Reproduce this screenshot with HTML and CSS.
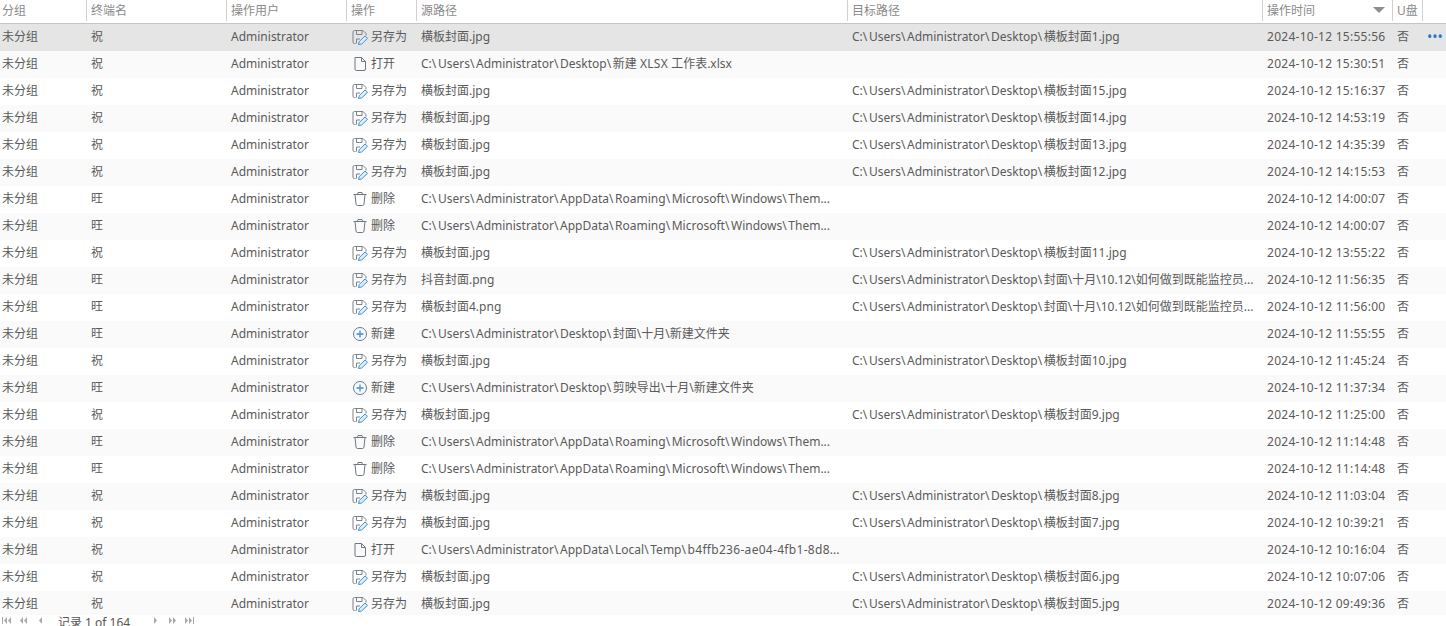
FILE: index.html
```html
<!DOCTYPE html>
<html lang="zh">
<head>
<meta charset="utf-8">
<title>文件操作记录</title>
<link rel="stylesheet" href="styles.css">
</head>
<body>
<svg class="defs" width="0" height="0" aria-hidden="true">
  <symbol id="i-save" viewBox="0 0 16 16">
    <path d="M3.500 14.500H2.500Q1 14.500 1 13V3Q1 1.500 2.500 1.500H11L14 4.500V6.500" fill="none" stroke="#7b838b"/>
    <path d="M4.500 1.500V5.500H10V1.500M4.500 14.500V10H8" fill="none" stroke="#7b838b"/>
    <path d="M6.500 15.500L7.300 12.500L13 7L15.500 9.300L9.700 15Z" fill="#dcecf8" stroke="#3f92d4" stroke-linejoin="round"/>
  </symbol>
  <symbol id="i-open" viewBox="0 0 16 16">
    <path d="M3 1.500H9.500L13.500 5.500V13Q13.500 14.500 12 14.500H4.500Q3 14.500 3 13ZM9.500 1.500V5.500H13.500" fill="none" stroke="#6f7780"/>
  </symbol>
  <symbol id="i-del" viewBox="0 0 16 16">
    <path d="M1.500 3.500H14.500M5.500 3.500L6 1.500H10L10.500 3.500M3 3.500L4 13Q4.200 14.500 5.500 14.500H10.500Q11.800 14.500 12 13L13 3.500" fill="none" stroke="#6f7780"/>
  </symbol>
  <symbol id="i-new" viewBox="0 0 16 16">
    <circle cx="8" cy="8" r="6.500" fill="none" stroke="#5f7f9c"/>
    <path d="M4.500 8H11.500M8 4.500V11.500" fill="none" stroke="#3d8fd1" stroke-width="1.300"/>
  </symbol>
</svg>
<main class="grid">
  <div class="row head">
    <div class="c bd">分组</div><div class="c bd">终端名</div><div class="c bd">操作用户</div><div class="c bd">操作</div><div class="c bd">源路径</div><div class="c bd">目标路径</div>
    <div class="c bd sort">操作时间<span class="arrow"></span></div><div class="c bd">U盘</div><div class="c"></div>
  </div>
  <div class="body">
    <div class="row sel"><div class="c">未分组</div><div class="c">祝</div><div class="c">Administrator</div><div class="c op"><svg class="ic"><use href="#i-save"/></svg>另存为</div><div class="c">横板封面.jpg</div><div class="c">C:<b>\</b>Users<b>\</b>Administrator<b>\</b>Desktop<b>\</b>横板封面1.jpg</div><div class="c">2024-10-12 15:55:56</div><div class="c">否</div><div class="c more">•••</div></div>
    <div class="row"><div class="c">未分组</div><div class="c">祝</div><div class="c">Administrator</div><div class="c op"><svg class="ic"><use href="#i-open"/></svg>打开</div><div class="c">C:<b>\</b>Users<b>\</b>Administrator<b>\</b>Desktop<b>\</b>新建 <span class="wide">XLSX</span> 工作表.xlsx</div><div class="c"></div><div class="c">2024-10-12 15:30:51</div><div class="c">否</div><div class="c"></div></div>
    <div class="row"><div class="c">未分组</div><div class="c">祝</div><div class="c">Administrator</div><div class="c op"><svg class="ic"><use href="#i-save"/></svg>另存为</div><div class="c">横板封面.jpg</div><div class="c">C:<b>\</b>Users<b>\</b>Administrator<b>\</b>Desktop<b>\</b>横板封面15.jpg</div><div class="c">2024-10-12 15:16:37</div><div class="c">否</div><div class="c"></div></div>
    <div class="row"><div class="c">未分组</div><div class="c">祝</div><div class="c">Administrator</div><div class="c op"><svg class="ic"><use href="#i-save"/></svg>另存为</div><div class="c">横板封面.jpg</div><div class="c">C:<b>\</b>Users<b>\</b>Administrator<b>\</b>Desktop<b>\</b>横板封面14.jpg</div><div class="c">2024-10-12 14:53:19</div><div class="c">否</div><div class="c"></div></div>
    <div class="row"><div class="c">未分组</div><div class="c">祝</div><div class="c">Administrator</div><div class="c op"><svg class="ic"><use href="#i-save"/></svg>另存为</div><div class="c">横板封面.jpg</div><div class="c">C:<b>\</b>Users<b>\</b>Administrator<b>\</b>Desktop<b>\</b>横板封面13.jpg</div><div class="c">2024-10-12 14:35:39</div><div class="c">否</div><div class="c"></div></div>
    <div class="row"><div class="c">未分组</div><div class="c">祝</div><div class="c">Administrator</div><div class="c op"><svg class="ic"><use href="#i-save"/></svg>另存为</div><div class="c">横板封面.jpg</div><div class="c">C:<b>\</b>Users<b>\</b>Administrator<b>\</b>Desktop<b>\</b>横板封面12.jpg</div><div class="c">2024-10-12 14:15:53</div><div class="c">否</div><div class="c"></div></div>
    <div class="row"><div class="c">未分组</div><div class="c">旺</div><div class="c">Administrator</div><div class="c op"><svg class="ic"><use href="#i-del"/></svg>删除</div><div class="c">C:<b>\</b>Users<b>\</b>Administrator<b>\</b>AppData<b>\</b>Roaming<b>\</b>Microsoft<b>\</b>Windows<b>\</b>Them...</div><div class="c"></div><div class="c">2024-10-12 14:00:07</div><div class="c">否</div><div class="c"></div></div>
    <div class="row"><div class="c">未分组</div><div class="c">旺</div><div class="c">Administrator</div><div class="c op"><svg class="ic"><use href="#i-del"/></svg>删除</div><div class="c">C:<b>\</b>Users<b>\</b>Administrator<b>\</b>AppData<b>\</b>Roaming<b>\</b>Microsoft<b>\</b>Windows<b>\</b>Them...</div><div class="c"></div><div class="c">2024-10-12 14:00:07</div><div class="c">否</div><div class="c"></div></div>
    <div class="row"><div class="c">未分组</div><div class="c">祝</div><div class="c">Administrator</div><div class="c op"><svg class="ic"><use href="#i-save"/></svg>另存为</div><div class="c">横板封面.jpg</div><div class="c">C:<b>\</b>Users<b>\</b>Administrator<b>\</b>Desktop<b>\</b>横板封面11.jpg</div><div class="c">2024-10-12 13:55:22</div><div class="c">否</div><div class="c"></div></div>
    <div class="row"><div class="c">未分组</div><div class="c">旺</div><div class="c">Administrator</div><div class="c op"><svg class="ic"><use href="#i-save"/></svg>另存为</div><div class="c">抖音封面.png</div><div class="c">C:<b>\</b>Users<b>\</b>Administrator<b>\</b>Desktop<b>\</b>封面\十月\10.12\如何做到既能监控员...</div><div class="c">2024-10-12 11:56:35</div><div class="c">否</div><div class="c"></div></div>
    <div class="row"><div class="c">未分组</div><div class="c">旺</div><div class="c">Administrator</div><div class="c op"><svg class="ic"><use href="#i-save"/></svg>另存为</div><div class="c">横板封面4.png</div><div class="c">C:<b>\</b>Users<b>\</b>Administrator<b>\</b>Desktop<b>\</b>封面\十月\10.12\如何做到既能监控员...</div><div class="c">2024-10-12 11:56:00</div><div class="c">否</div><div class="c"></div></div>
    <div class="row"><div class="c">未分组</div><div class="c">旺</div><div class="c">Administrator</div><div class="c op"><svg class="ic"><use href="#i-new"/></svg>新建</div><div class="c">C:<b>\</b>Users<b>\</b>Administrator<b>\</b>Desktop<b>\</b>封面\十月\新建文件夹</div><div class="c"></div><div class="c">2024-10-12 11:55:55</div><div class="c">否</div><div class="c"></div></div>
    <div class="row"><div class="c">未分组</div><div class="c">祝</div><div class="c">Administrator</div><div class="c op"><svg class="ic"><use href="#i-save"/></svg>另存为</div><div class="c">横板封面.jpg</div><div class="c">C:<b>\</b>Users<b>\</b>Administrator<b>\</b>Desktop<b>\</b>横板封面10.jpg</div><div class="c">2024-10-12 11:45:24</div><div class="c">否</div><div class="c"></div></div>
    <div class="row"><div class="c">未分组</div><div class="c">旺</div><div class="c">Administrator</div><div class="c op"><svg class="ic"><use href="#i-new"/></svg>新建</div><div class="c">C:<b>\</b>Users<b>\</b>Administrator<b>\</b>Desktop<b>\</b>剪映导出\十月\新建文件夹</div><div class="c"></div><div class="c">2024-10-12 11:37:34</div><div class="c">否</div><div class="c"></div></div>
    <div class="row"><div class="c">未分组</div><div class="c">祝</div><div class="c">Administrator</div><div class="c op"><svg class="ic"><use href="#i-save"/></svg>另存为</div><div class="c">横板封面.jpg</div><div class="c">C:<b>\</b>Users<b>\</b>Administrator<b>\</b>Desktop<b>\</b>横板封面9.jpg</div><div class="c">2024-10-12 11:25:00</div><div class="c">否</div><div class="c"></div></div>
    <div class="row"><div class="c">未分组</div><div class="c">旺</div><div class="c">Administrator</div><div class="c op"><svg class="ic"><use href="#i-del"/></svg>删除</div><div class="c">C:<b>\</b>Users<b>\</b>Administrator<b>\</b>AppData<b>\</b>Roaming<b>\</b>Microsoft<b>\</b>Windows<b>\</b>Them...</div><div class="c"></div><div class="c">2024-10-12 11:14:48</div><div class="c">否</div><div class="c"></div></div>
    <div class="row"><div class="c">未分组</div><div class="c">旺</div><div class="c">Administrator</div><div class="c op"><svg class="ic"><use href="#i-del"/></svg>删除</div><div class="c">C:<b>\</b>Users<b>\</b>Administrator<b>\</b>AppData<b>\</b>Roaming<b>\</b>Microsoft<b>\</b>Windows<b>\</b>Them...</div><div class="c"></div><div class="c">2024-10-12 11:14:48</div><div class="c">否</div><div class="c"></div></div>
    <div class="row"><div class="c">未分组</div><div class="c">祝</div><div class="c">Administrator</div><div class="c op"><svg class="ic"><use href="#i-save"/></svg>另存为</div><div class="c">横板封面.jpg</div><div class="c">C:<b>\</b>Users<b>\</b>Administrator<b>\</b>Desktop<b>\</b>横板封面8.jpg</div><div class="c">2024-10-12 11:03:04</div><div class="c">否</div><div class="c"></div></div>
    <div class="row"><div class="c">未分组</div><div class="c">祝</div><div class="c">Administrator</div><div class="c op"><svg class="ic"><use href="#i-save"/></svg>另存为</div><div class="c">横板封面.jpg</div><div class="c">C:<b>\</b>Users<b>\</b>Administrator<b>\</b>Desktop<b>\</b>横板封面7.jpg</div><div class="c">2024-10-12 10:39:21</div><div class="c">否</div><div class="c"></div></div>
    <div class="row"><div class="c">未分组</div><div class="c">祝</div><div class="c">Administrator</div><div class="c op"><svg class="ic"><use href="#i-open"/></svg>打开</div><div class="c">C:<b>\</b>Users<b>\</b>Administrator<b>\</b>AppData<b>\</b>Local<b>\</b>Temp<b>\</b><span class="wide">b4ffb236-ae04-4fb1-8d8</span>...</div><div class="c"></div><div class="c">2024-10-12 10:16:04</div><div class="c">否</div><div class="c"></div></div>
    <div class="row"><div class="c">未分组</div><div class="c">祝</div><div class="c">Administrator</div><div class="c op"><svg class="ic"><use href="#i-save"/></svg>另存为</div><div class="c">横板封面.jpg</div><div class="c">C:<b>\</b>Users<b>\</b>Administrator<b>\</b>Desktop<b>\</b>横板封面6.jpg</div><div class="c">2024-10-12 10:07:06</div><div class="c">否</div><div class="c"></div></div>
    <div class="row"><div class="c">未分组</div><div class="c">祝</div><div class="c">Administrator</div><div class="c op"><svg class="ic"><use href="#i-save"/></svg>另存为</div><div class="c">横板封面.jpg</div><div class="c">C:<b>\</b>Users<b>\</b>Administrator<b>\</b>Desktop<b>\</b>横板封面5.jpg</div><div class="c">2024-10-12 09:49:36</div><div class="c">否</div><div class="c"></div></div>
  </div>
  <footer class="pager">
    <span class="nav">
      <svg class="pg" viewBox="0 0 9 7"><path d="M0 0H1V7H0ZM5 0V7L2 3.500ZM9 0V7L6 3.500Z"/></svg>
      <svg class="pg" viewBox="0 0 9 7"><path d="M4 0V7L1 3.500ZM8 0V7L5 3.500Z"/></svg>
      <svg class="pg" viewBox="0 0 9 7"><path d="M6 0V7L3 3.500Z"/></svg>
    </span>
    <span class="rec">记录 1 of 164</span>
    <span class="nav">
      <svg class="pg" viewBox="0 0 9 7"><path d="M3 0V7L6 3.500Z"/></svg>
      <svg class="pg" viewBox="0 0 9 7"><path d="M1 0V7L4 3.500ZM5 0V7L8 3.500Z"/></svg>
      <svg class="pg" viewBox="0 0 9 7"><path d="M0 0V7L3 3.500ZM4 0V7L7 3.500ZM8 0V7H9V0Z"/></svg>
    </span>
  </footer>
</main>
</body>
</html>
```
FILE: styles.css
```css
* { box-sizing: border-box; }
html, body { margin: 0; height: 100%; overflow: hidden; background: #fff; }
.defs { position: absolute; }
.grid {
  height: 626px;
  display: flex;
  flex-direction: column;
  font-family: "Noto Sans", "Noto Sans CJK SC", sans-serif;
  font-size: 12px;
  color: #5a5a5a;
}
.row {
  display: grid;
  grid-template-columns: 87px 140px 120px 70px 431px 415px 130px 30px 23px;
  height: 27px;
  align-items: center;
  flex: none;
}
.row:nth-child(even) { background: #fafafa; }
.row.sel { background: #e5e5e5; }
.c { padding-left: 4px; padding-bottom: 3px; white-space: nowrap; overflow: hidden; }
.c:first-child { padding-left: 2px; }
.c b { font-weight: normal; letter-spacing: 1.6px; }
.c:nth-child(7) { letter-spacing: 0.27px; }
.wide { letter-spacing: 0.3px; }
.head {
  height: 24px;
  border-bottom: 1px solid #c4c4c4;
  align-items: stretch;
  color: #8a8a8a;
}
.head .c { display: flex; align-items: center; padding-bottom: 1px; letter-spacing: 0; }
.head .bd { border-right: 1px solid #d0d0d0; height: 21px; }
.sort { justify-content: space-between; padding-right: 7px; }
.arrow {
  width: 0; height: 0;
  border-left: 6px solid transparent;
  border-right: 6px solid transparent;
  border-top: 6px solid #8e8e8e;
}
.body { height: 591px; flex: none; overflow: hidden; }
.op { display: flex; align-items: center; gap: 3px; padding-left: 5px; }
.ic { width: 16px; height: 16px; flex: none; margin-top: 2px; }
.more { color: #1f78c8; font-size: 14px; padding-left: 4px; overflow: visible; }
.pager {
  flex: 1;
  display: flex;
  align-items: center;
  padding-left: 2px;
  color: #555;
  min-height: 0;
}
.rec { margin: 0 21px 0 13px; line-height: 11px; padding-top: 3px; }
.nav { display: flex; gap: 8px; }
.pg { width: 9px; height: 7px; fill: #a8a8a8; }
```
